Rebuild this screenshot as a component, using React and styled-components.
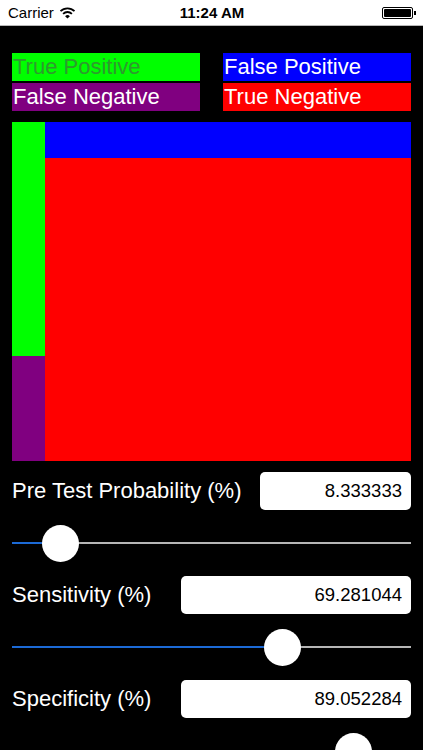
import React from "react"
import styled, { createGlobalStyle } from "styled-components"

const GlobalStyle = createGlobalStyle`
  html, body {
    margin: 0;
    padding: 0;
    background: #000;
    font-family: "Liberation Sans", Arial, sans-serif;
  }
`

const Screen = styled.div`
  width: 423px;
  height: 750px;
  overflow: hidden;
  background: #000;
`

const StatusBar = styled.header`
  height: 25px;
  background: #fff;
  border-bottom: 1px solid #b8b8b8;
  display: grid;
  grid-template-columns: 1fr auto 1fr;
  align-items: center;
  padding: 0 7px 0 8px;
  font-size: 15px;
  color: #000;
`

const Carrier = styled.div`
  display: flex;
  align-items: center;
  gap: 5px;
`

const Clock = styled.div`
  font-weight: bold;
  font-size: 15px;
`

const Battery = styled.div`
  justify-self: end;
  display: flex;
  align-items: center;
`

const BatteryBody = styled.div`
  width: 27px;
  height: 8px;
  border: 1px solid #000;
  border-radius: 2px;
  padding: 1px;
  display: flex;

  &::before {
    content: "";
    flex: 1;
    background: #000;
    border-radius: 1px;
  }
`

const BatteryNub = styled.div`
  width: 2px;
  height: 4px;
  background: #000;
  margin-left: 1px;
`

const Content = styled.main`
  padding: 27px 12px 0;
`

const Legend = styled.div`
  display: grid;
  grid-template-columns: 188px 188px;
  column-gap: 23px;
  row-gap: 2px;
`

const LegendItem = styled.div`
  height: 28px;
  background: ${p => p.$bg};
  color: ${p => p.$fg || "#fff"};
  font-size: 22px;
  line-height: 28px;
  padding-left: 1px;
  white-space: nowrap;
`

const Chart = styled.div`
  margin-top: 11px;
  height: 339px;
  display: grid;
  grid-template-columns: 33px 1fr;
`

const Column = styled.div`
  display: grid;
  grid-template-rows: ${p => p.$rows};
`

const Cell = styled.div`
  background: ${p => p.$bg};
`

const Controls = styled.section`
  margin-top: 11px;
`

const FieldRow = styled.div`
  height: 38px;
  display: flex;
  align-items: center;
  justify-content: space-between;
`

const Label = styled.span`
  color: #fff;
  font-size: 22px;
  white-space: nowrap;
`

const Field = styled.div`
  width: ${p => p.$w}px;
  height: 38px;
  box-sizing: border-box;
  background: #fff;
  border-radius: 5px;
  display: flex;
  align-items: center;
  justify-content: flex-end;
  padding-right: 9px;
  font-size: 18.5px;
  color: #000;
`

const SliderRow = styled.div`
  height: 66px;
  position: relative;
  display: flex;
  align-items: center;
`

const Track = styled.div`
  width: 100%;
  height: 2px;
  background: linear-gradient(
    to right,
    #1c6ad6 0,
    #1c6ad6 ${p => p.$pct}%,
    #b6b6b6 ${p => p.$pct}%,
    #b6b6b6 100%
  );
`

const Thumb = styled.div`
  position: absolute;
  top: 50%;
  width: 37px;
  height: 37px;
  margin-left: -18.5px;
  margin-top: -18.5px;
  border-radius: 50%;
  background: #fff;
  box-shadow: 0 2px 3px rgba(0, 0, 0, 0.3);
`

const Wifi = () => (
  <svg width="17" height="12" viewBox="0 0 16 12">
    <path d="M1 4.2a10 10 0 0 1 14 0" stroke="#000" strokeWidth="1.8" fill="none" />
    <path d="M3.6 6.8a6.3 6.3 0 0 1 8.8 0" stroke="#000" strokeWidth="1.8" fill="none" />
    <path d="M8 11.5L5.6 9.2a3.4 3.4 0 0 1 4.8 0z" fill="#000" />
  </svg>
)

const TRACK_W = 399

const Slider = ({ at }) => {
  const pct = (at / TRACK_W) * 100
  return (
    <SliderRow>
      <Track $pct={pct} />
      <Thumb style={{ left: at }} />
    </SliderRow>
  )
}

const controls = [
  { label: "Pre Test Probability (%)", value: "8.333333", w: 151, at: 48 },
  { label: "Sensitivity (%)", value: "69.281044", w: 230, at: 270 },
  { label: "Specificity (%)", value: "89.052284", w: 230, at: 341 },
]

export default function App() {
  return (
    <Screen>
      <GlobalStyle />
      <StatusBar>
        <Carrier>
          Carrier <Wifi />
        </Carrier>
        <Clock>11:24 AM</Clock>
        <Battery>
          <BatteryBody />
          <BatteryNub />
        </Battery>
      </StatusBar>
      <Content>
        <Legend>
          <LegendItem $bg="#00ff00" $fg="#2e9a2e">True Positive</LegendItem>
          <LegendItem $bg="#0000ff">False Positive</LegendItem>
          <LegendItem $bg="#800080">False Negative</LegendItem>
          <LegendItem $bg="#ff0000">True Negative</LegendItem>
        </Legend>
        <Chart>
          <Column $rows="234px 1fr">
            <Cell $bg="#00ff00" />
            <Cell $bg="#800080" />
          </Column>
          <Column $rows="36px 1fr">
            <Cell $bg="#0000ff" />
            <Cell $bg="#ff0000" />
          </Column>
        </Chart>
        <Controls>
          {controls.map(c => (
            <React.Fragment key={c.label}>
              <FieldRow>
                <Label>{c.label}</Label>
                <Field $w={c.w}>{c.value}</Field>
              </FieldRow>
              <Slider at={c.at} />
            </React.Fragment>
          ))}
        </Controls>
      </Content>
    </Screen>
  )
}
